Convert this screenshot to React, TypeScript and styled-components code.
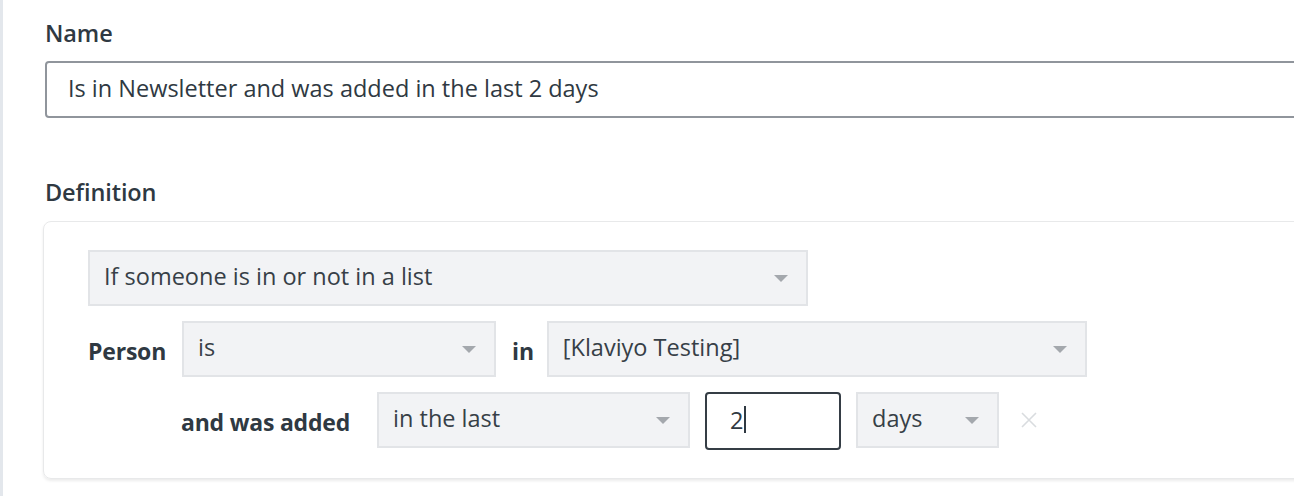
import React from "react";
import styled, { createGlobalStyle } from "styled-components";

const Global = createGlobalStyle`
  html, body { margin: 0; padding: 0; background: #fff; }
  body { font-family: "Open Sans", "Noto Sans", Arial, sans-serif; color: #2f3942; overflow: hidden; }
  * { box-sizing: border-box; }
`;

const Page = styled.div`
  width: 1294px;
  height: 496px;
  border-left: 3px solid #e3e7ec;
  padding: 17px 0 0 42px;
  overflow: hidden;
`;

const Label = styled.div`
  font-size: 23.5px;
  font-weight: 600;
  color: #2f3942;
  line-height: 32px;
  letter-spacing: -0.1px;
`;

const NameInput = styled.div`
  margin-top: 12px;
  width: 1300px;
  height: 57px;
  border: 2px solid #90959c;
  border-radius: 4px;
  display: flex;
  align-items: center;
  padding: 0 0 3px 21px;
  font-size: 23.5px;
  color: #2f3942;
`;

const DefLabel = styled(Label)`
  margin-top: 58px;
`;

const Panel = styled.div`
  margin-top: 13px;
  margin-left: -2px;
  width: 1300px;
  height: 258px;
  border: 1px solid #e8e9ea;
  border-radius: 8px;
  box-shadow: 0 2px 3px rgba(0, 0, 0, 0.08);
  padding: 28px 0 0 44px;
  display: flex;
  flex-direction: column;
  gap: 15px;
`;

const Row = styled.div<{ $indent?: number }>`
  display: flex;
  align-items: flex-start;
  padding-left: ${(p) => p.$indent ?? 0}px;
`;

const Select = styled.div<{ $w: number }>`
  width: ${(p) => p.$w}px;
  height: 56px;
  background: #f2f3f5;
  border: 2px solid #e2e4e7;
  display: flex;
  align-items: center;
  justify-content: space-between;
  padding: 0 18px 4px 14px;
  font-size: 23.5px;
  color: #373f47;
`;

const Arrow = styled.span`
  width: 0;
  height: 0;
  border-left: 7px solid transparent;
  border-right: 7px solid transparent;
  border-top: 7px solid #a4a8ad;
  margin-top: 4px;
`;

const Bold = styled.span<{ $ml?: number; $mr?: number }>`
  height: 56px;
  display: flex;
  align-items: center;
  padding-top: 3px;
  font-size: 23px;
  font-weight: 700;
  color: #2f3942;
  margin-left: ${(p) => p.$ml ?? 0}px;
  margin-right: ${(p) => p.$mr ?? 0}px;
  letter-spacing: -0.2px;
`;

const NumInput = styled.div`
  width: 136px;
  height: 58px;
  margin: 0 15px;
  border: 2px solid #353d45;
  border-radius: 4px;
  display: flex;
  align-items: center;
  padding: 0 0 3px 23px;
  font-size: 23.5px;
  color: #2f3942;
`;

const Caret = styled.span`
  display: inline-block;
  width: 2px;
  height: 27px;
  background: #2f3942;
`;

const Remove = styled.span`
  margin-left: 22px;
  height: 56px;
  display: flex;
  align-items: center;
`;

const Dropdown = ({ w, children }: { w: number; children: React.ReactNode }) => (
  <Select $w={w}>
    <span>{children}</span>
    <Arrow />
  </Select>
);

export default function App() {
  return (
    <>
      <Global />
      <Page>
        <Label>Name</Label>
        <NameInput>Is in Newsletter and was added in the last 2 days</NameInput>
        <DefLabel>Definition</DefLabel>
        <Panel>
          <Row>
            <Dropdown w={720}>If someone is in or not in a list</Dropdown>
          </Row>
          <Row>
            <Bold $mr={16}>Person</Bold>
            <Dropdown w={314}>is</Dropdown>
            <Bold $ml={16} $mr={13}>in</Bold>
            <Dropdown w={540}>[Klaviyo Testing]</Dropdown>
          </Row>
          <Row $indent={93}>
            <Bold $mr={27}>and was added</Bold>
            <Dropdown w={313}>in the last</Dropdown>
            <NumInput>
              2<Caret />
            </NumInput>
            <Dropdown w={143}>days</Dropdown>
            <Remove>
              <svg width="16" height="16" viewBox="0 0 16 16">
                <path d="M1 1L15 15M15 1L1 15" stroke="#d9dcdf" strokeWidth="1.6" />
              </svg>
            </Remove>
          </Row>
        </Panel>
      </Page>
    </>
  );
}
